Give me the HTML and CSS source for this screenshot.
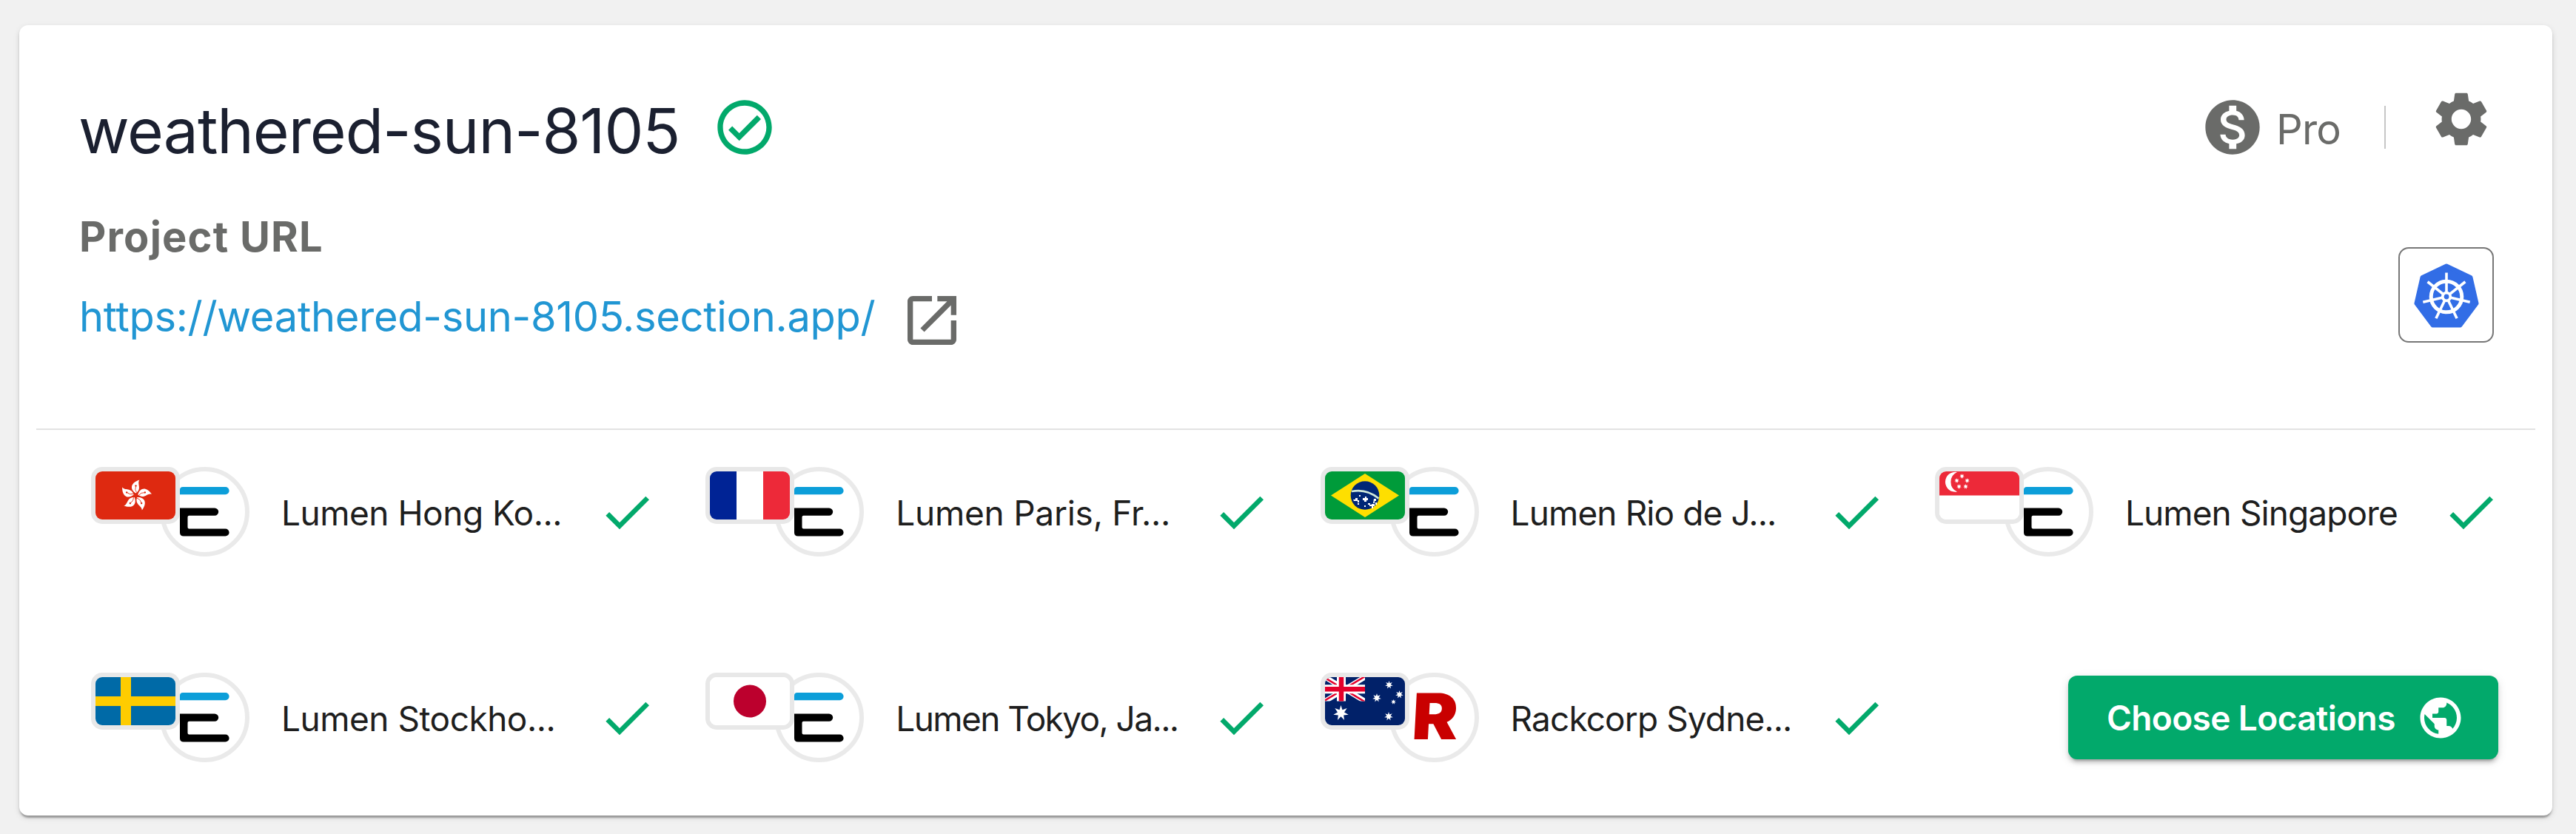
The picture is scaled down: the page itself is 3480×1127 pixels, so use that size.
FILE: index.html
```html
<!DOCTYPE html>
<html lang="en">
<head>
<meta charset="utf-8">
<title>weathered-sun-8105</title>
<link rel="stylesheet" href="styles.css">
</head>
<body>
<svg class="defs" aria-hidden="true">
  <symbol id="check" viewBox="0 0 24 24"><path d="M9 16.17L4.83 12l-1.42 1.41L9 19 21 7l-1.41-1.41z"/></symbol>
  <symbol id="lumen" viewBox="0 0 67 67"><path fill="#0c9ed9" d="M4 0H61.500a5 5 0 0 1 0 10.200H0V4Q0 0 4 0z"/><path d="M0 28.400H47a5.200 5.200 0 0 1 0 10.400H12.500q-2 0-2 2V54.400q0 2 2 2H61.500a5 5 0 0 1 0 10.200H5q-5 0-5-5z"/></symbol>
  <symbol id="star7" viewBox="-10 -10 20 20"><path fill="#fff" d="M0-10L1.900-4 7.800-6.200 4.300-1 9.700 2.200 3.500 2.800 4.300 9 0 4.500-4.300 9-3.500 2.800-9.700 2.200-4.300-1-7.800-6.200-1.900-4z"/></symbol>
</svg>
<main class="card">
  <header class="header">
    <div class="project">
      <div class="title-row">
        <h1 class="title">weathered-sun-8105</h1>
        <svg class="icon status" viewBox="0 0 24 24"><path d="M12 2C6.480 2 2 6.480 2 12s4.480 10 10 10 10-4.480 10-10S17.520 2 12 2zm0 18c-4.410 0-8-3.590-8-8s3.590-8 8-8 8 3.590 8 8-3.590 8-8 8zm4.590-12.420L10 14.170l-2.590-2.580L6 13l4 4 8-8z"/></svg>
      </div>
      <h2 class="label">Project URL</h2>
      <div class="url-row">
        <a class="url" href="#">https://weathered-sun-8105.section.app/</a>
        <svg class="icon open" viewBox="0 0 24 24"><path d="M19 19H5V5h7V3H5c-1.11 0-2 .9-2 2v14c0 1.1.89 2 2 2h14c1.1 0 2-.9 2-2v-7h-2v7zM14 3v2h3.59l-9.83 9.83 1.41 1.41L19 6.41V10h2V3h-7z"/></svg>
      </div>
    </div>
    <div class="side">
      <div class="plan-row">
        <svg class="icon coin" viewBox="0 0 24 24"><path d="M12 2C6.48 2 2 6.48 2 12s4.48 10 10 10 10-4.48 10-10S17.52 2 12 2zm1.41 16.09V20h-2.67v-1.93c-1.71-.36-3.16-1.46-3.27-3.4h1.96c.1 1.05.82 1.87 2.65 1.87 1.96 0 2.4-.98 2.4-1.59 0-.83-.44-1.61-2.67-2.14-2.48-.6-4.18-1.62-4.18-3.67 0-1.72 1.39-2.84 3.11-3.21V4h2.67v1.95c1.86.45 2.79 1.86 2.85 3.39H14.3c-.05-1.11-.64-1.87-2.22-1.87-1.5 0-2.4.68-2.4 1.64 0 .84.65 1.39 2.67 1.91s4.18 1.39 4.18 3.91c-.01 1.83-1.38 2.83-3.12 3.16z"/></svg>
        <span class="plan">Pro</span>
        <span class="divider"></span>
        <svg class="icon gear" viewBox="0 0 24 24"><path d="M19.14 12.94c.04-.3.06-.61.06-.94 0-.32-.02-.64-.07-.94l2.03-1.58c.18-.14.23-.41.12-.61l-1.92-3.32c-.12-.22-.37-.29-.59-.22l-2.39.96c-.5-.38-1.03-.7-1.62-.94l-.36-2.54c-.04-.24-.24-.41-.48-.41h-3.84c-.24 0-.43.17-.47.41l-.36 2.54c-.59.24-1.13.57-1.62.94l-2.39-.96c-.22-.08-.47 0-.59.22L2.740 8.870c-.12.21-.08.47.12.61l2.030 1.580c-.05.3-.09.63-.09.94s.02.64.07.94l-2.030 1.580c-.18.14-.23.41-.12.61l1.920 3.320c.12.22.37.29.59.22l2.390-.96c.5.38 1.030.7 1.620.94l.36 2.540c.05.24.24.41.48.41h3.840c.24 0 .44-.17.47-.41l.36-2.540c.59-.24 1.130-.56 1.620-.94l2.390.96c.22.08.47 0 .59-.22l1.920-3.320c.12-.22.07-.47-.12-.61l-2.010-1.580zM12 15.600c-1.980 0-3.600-1.620-3.600-3.600s1.620-3.600 3.600-3.600 3.600 1.620 3.600 3.600-1.620 3.600-3.600 3.600z"/></svg>
      </div>
      <div class="k8s">
        <svg class="k8s-logo" viewBox="-50 -52 100 100">
          <path fill="#326de6" stroke="#326de6" stroke-width="6" stroke-linejoin="round" d="M0-41.500L32.500-26 40.500 9 18.500 38.500H-18.500L-40.500 9-32.500-26z"/>
          <g fill="none" stroke="#fff" stroke-width="3.600">
            <circle r="20.800" stroke-width="5"/>
            <path id="spoke" d="M0-5V-32.500"/>
            <use href="#spoke" transform="rotate(51.430)"/><use href="#spoke" transform="rotate(102.860)"/><use href="#spoke" transform="rotate(154.290)"/><use href="#spoke" transform="rotate(205.710)"/><use href="#spoke" transform="rotate(257.140)"/><use href="#spoke" transform="rotate(308.570)"/>
            <circle r="5.300" stroke-width="3.800"/>
          </g>
        </svg>
      </div>
    </div>
  </header>
  <section class="locations">
    <div class="location">
      <div class="badges">
        <span class="provider"><svg class="logo"><use href="#lumen"/></svg></span>
        <svg class="flag" viewBox="0 0 108 65" preserveAspectRatio="none"><path fill="#de2910" d="M0 0H108V65H0z"/><g transform="translate(54.500 32.500)"><g id="petal"><path fill="#fff" d="M0-3C-8-8-8-17 5-21 1-16 9-9 0-3z"/><path d="M1-4Q-2-8 0-12" fill="none" stroke="#de2910" stroke-width=".8"/><circle cx="0" cy="-13" r="1.200" fill="#de2910"/></g><use href="#petal" transform="rotate(72)"/><use href="#petal" transform="rotate(144)"/><use href="#petal" transform="rotate(216)"/><use href="#petal" transform="rotate(288)"/></g></svg>
      </div>
      <span class="name wide">Lumen Hong Ko...</span><svg class="tick"><use href="#check"/></svg>
    </div>
    <div class="location">
      <div class="badges">
        <span class="provider"><svg class="logo"><use href="#lumen"/></svg></span>
        <svg class="flag" viewBox="0 0 108 65" preserveAspectRatio="none"><path fill="#fff" d="M0 0H108V65H0z"/><path fill="#002395" d="M0 0H36V65H0z"/><path fill="#ed2939" d="M72 0H108V65H72z"/></svg>
      </div>
      <span class="name wider">Lumen Paris, Fr...</span><svg class="tick"><use href="#check"/></svg>
    </div>
    <div class="location">
      <div class="badges">
        <span class="provider"><svg class="logo"><use href="#lumen"/></svg></span>
        <svg class="flag" viewBox="0 0 108 65" preserveAspectRatio="none"><path fill="#009b3a" d="M0 0H108V65H0z"/><path fill="#fedf00" d="M54 3L100 32.500 54 62 8 32.500z"/><circle cx="54" cy="32.500" r="19.300" fill="#002776"/><path d="M36 27Q56 23 72.500 36.500" fill="none" stroke="#cfe8da" stroke-width="2.600"/><path fill="#fff" d="M38 38h3v-2h3v3h2v3h-2v-2h-5zM51 36h3v-2h2v2h2v3h-2v2h-3v-2h-2zM58 43h3v2h2v2h-3v-2h-2zM66 37h3v3h-2v3h-2zM63 44h4v3h-2v3h-2zM68 42h2v3h-2zM53 46h2v2h-2zM44 43h2v2h-2zM46 32h2v2h-2z"/></svg>
      </div>
      <span class="name">Lumen Rio de J...</span><svg class="tick"><use href="#check"/></svg>
    </div>
    <div class="location">
      <div class="badges">
        <span class="provider"><svg class="logo"><use href="#lumen"/></svg></span>
        <svg class="flag" viewBox="0 0 108 65" preserveAspectRatio="none"><path fill="#fff" d="M0 0H108V65H0z"/><path fill="#ed2939" d="M0 0H108V32.500H0z"/><path fill="#fff" d="M24 1A13.500 13.500 0 1 0 24 27.500 14.500 14.500 0 0 1 24 1z"/><use href="#star7" x="27" y="3" width="7" height="7"/><use href="#star7" x="20" y="9" width="7" height="7"/><use href="#star7" x="34" y="9" width="7" height="7"/><use href="#star7" x="23" y="17" width="7" height="7"/><use href="#star7" x="32" y="17" width="7" height="7"/></svg>
      </div>
      <span class="name">Lumen Singapore</span><svg class="tick"><use href="#check"/></svg>
    </div>
    <div class="location">
      <div class="badges">
        <span class="provider"><svg class="logo"><use href="#lumen"/></svg></span>
        <svg class="flag" viewBox="0 0 108 65" preserveAspectRatio="none"><path fill="#006aa7" d="M0 0H108V65H0z"/><path fill="#fecc00" d="M34 0H48V26H108V39H48V65H34V39H0V26H34z"/></svg>
      </div>
      <span class="name wide">Lumen Stockho...</span><svg class="tick"><use href="#check"/></svg>
    </div>
    <div class="location">
      <div class="badges">
        <span class="provider"><svg class="logo"><use href="#lumen"/></svg></span>
        <svg class="flag" viewBox="0 0 108 65" preserveAspectRatio="none"><path fill="#fff" d="M0 0H108V65H0z"/><circle cx="54" cy="32.500" r="22" fill="#bc002d"/></svg>
      </div>
      <span class="name tight">Lumen Tokyo, Ja...</span><svg class="tick"><use href="#check"/></svg>
    </div>
    <div class="location">
      <div class="badges">
        <span class="provider"><b class="rack">R</b></span>
        <svg class="flag" viewBox="0 0 108 65" preserveAspectRatio="none"><path fill="#012169" d="M0 0H108V65H0z"/>
          <svg width="54" height="32.500" viewBox="0 0 54 32.500"><path d="M0 0L54 32.500M54 0L0 32.500" stroke="#fff" stroke-width="7"/><path d="M0 1L54 33.500M54-1L0 31.500" stroke="#e4002b" stroke-width="2.400"/><path d="M22 0V33M0 16.300H54" stroke="#fff" stroke-width="12"/><path d="M22 0V33M0 16.300H54" stroke="#e4002b" stroke-width="6.500"/></svg>
          <use href="#star7" x="11" y="38" width="21" height="21"/><use href="#star7" x="81" y="5" width="11" height="11"/><use href="#star7" x="64" y="22" width="12" height="12"/><use href="#star7" x="95" y="18" width="11" height="11"/><use href="#star7" x="89" y="30" width="7" height="7"/><use href="#star7" x="80" y="47" width="12" height="12"/></svg>
      </div>
      <span class="name">Rackcorp Sydne...</span><svg class="tick"><use href="#check"/></svg>
    </div>
    <button class="choose">Choose Locations<svg class="globe" viewBox="0 0 24 24"><path d="M12 2C6.48 2 2 6.48 2 12s4.48 10 10 10 10-4.48 10-10S17.52 2 12 2zm-1 17.93c-3.95-.49-7-3.85-7-7.93 0-.62.08-1.21.21-1.79L9 15v1c0 1.1.9 2 2 2v1.93zm6.9-2.54c-.26-.81-1-1.39-1.9-1.39h-1v-3c0-.55-.45-1-1-1H8v-2h2c.55 0 1-.45 1-1V7h2c1.1 0 2-.9 2-2v-.41c2.93 1.19 5 4.06 5 7.41 0 2.08-.8 3.97-2.1 5.39z"/></svg></button>
  </section>
</main>
</body>
</html>
```
FILE: styles.css
```css
* { box-sizing: border-box; }

body {
  margin: 0;
  height: 1127px;
  padding: 34px 32px 0 26px;
  background: #f1f1f1;
  color: #1e1e1e;
  font-family: Inter, "Liberation Sans", sans-serif;
}

.defs { position: absolute; width: 0; height: 0; }

.card {
  height: 1068px;
  background: #fff;
  border-radius: 12px;
  box-shadow: 0 5px 2px -2px rgba(0, 0, 0, .2), 0 3px 3px rgba(0, 0, 0, .14), 0 3px 8px rgba(0, 0, 0, .12);
}

/* Project summary */
.header {
  display: flex;
  justify-content: space-between;
  height: 547px;
  margin: 0 23px;
  padding-left: 58px;
  padding-right: 56px;
  border-bottom: 2px solid #e2e2e2;
}
.icon { display: block; flex: none; width: 88px; height: 88px; fill: #6a6b69; }
.project { padding-top: 94px; }
.title-row { display: flex; gap: 46px; height: 88px; }
.title {
  width: 809px;
  margin: 0;
  padding-top: 5px;
  font-size: 84px;
  font-weight: 400;
  line-height: 88px;
  letter-spacing: -1.1px;
  text-indent: -1px;
  white-space: nowrap;
  color: #1b2030;
}
.status { fill: #02a96b; }
.label { margin: 68px 0 0; font-size: 56px; font-weight: 700; line-height: 72px; letter-spacing: 1.2px; color: #6a6b69; }
.url-row { display: flex; margin-top: 28px; }
.url { width: 1108px; font-size: 56px; line-height: 88px; letter-spacing: -.3px; white-space: nowrap; color: #2196d3; text-decoration: none; }
.open { margin-top: 5px; }

.side { display: flex; flex-direction: column; align-items: flex-end; padding-top: 83px; }
.plan-row { display: flex; height: 105px; }
.coin { margin-top: 11px; }
.plan { width: 161px; padding: 14px 0 0 15px; font-size: 56px; line-height: 88px; letter-spacing: -.8px; color: #6a6b69; }
.divider { width: 2px; height: 58px; margin: 26px 58px 0 0; background: #c6c6c6; }
.k8s {
  display: flex;
  align-items: center;
  justify-content: center;
  width: 129px;
  height: 129px;
  margin-top: 112px;
  border: 2px solid #777;
  border-radius: 14px;
}
.k8s-logo { width: 100px; height: 100px; }

/* Edge locations */
.locations { display: grid; grid-template-columns: repeat(4, 830.3px); grid-template-rows: 278px 208px; padding-left: 97px; }
.location { display: flex; padding-top: 50px; min-width: 0; }
.badges { position: relative; flex: none; width: 214px; height: 121px; }
.provider {
  display: flex;
  align-items: center;
  justify-content: center;
  width: 121px;
  height: 121px;
  margin-left: 93px;
  border: 6px solid #eaeaea;
  border-radius: 50%;
}
.logo { width: 67px; height: 67px; }
.rack { padding: 0 0 4px 4px; font-size: 86px; font-weight: 900; line-height: 100px; color: #c90000; transform: skewX(-3deg) scaleX(1.08); }
.flag { position: absolute; left: 0; top: 0; width: 120px; height: 77px; border: 6px solid #e8e8e8; border-radius: 15px; }
.name { width: 427px; margin-left: 43px; font-size: 46px; line-height: 124px; letter-spacing: -.9px; white-space: nowrap; }
.name.wide { letter-spacing: -.5px; }
.name.wider { letter-spacing: -.25px; }
.name.tight { letter-spacing: -1.6px; }
.tick { width: 80px; height: 80px; margin-top: 21px; fill: #02a96b; }

.choose {
  display: flex;
  align-items: center;
  gap: 28px;
  width: 581px;
  height: 113px;
  margin: 54px 0 0 180px;
  padding: 0 0 0 52px;
  border: 0;
  border-radius: 12px;
  background: #02a96b;
  box-shadow: 0 7px 3px -5px rgba(0, 0, 0, .2), 0 5px 5px rgba(0, 0, 0, .14), 0 3px 13px rgba(0, 0, 0, .12);
  color: #fff;
  font: 600 46px Inter, "Liberation Sans", sans-serif;
  letter-spacing: -.6px;
  white-space: nowrap;
}
.globe { flex: none; width: 66px; height: 66px; fill: #fff; }
```
